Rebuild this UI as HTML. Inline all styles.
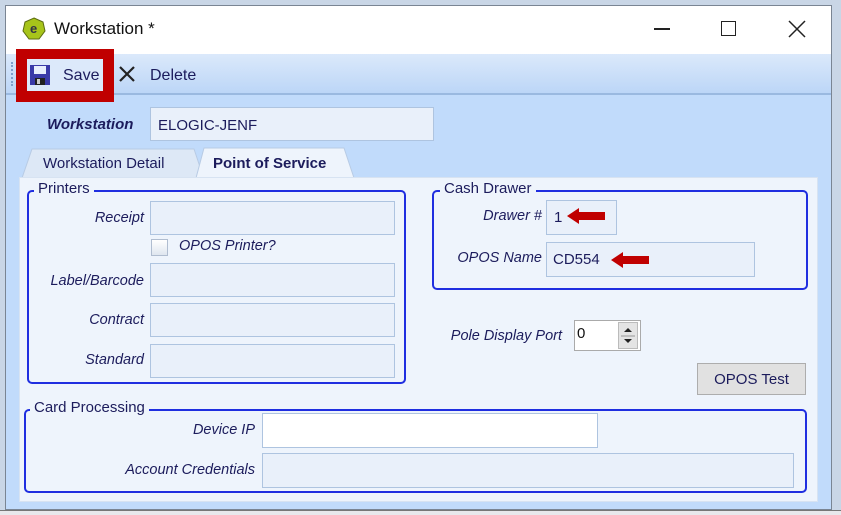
<!DOCTYPE html>
<html><head><meta charset="utf-8"><style>
*{box-sizing:border-box;margin:0;padding:0}
body{width:841px;height:515px;background:#c9d6e6;font-family:"Liberation Sans",sans-serif;font-size:14px;color:#1c1c5c;position:relative;overflow:hidden}
.a{position:absolute}
.win{left:5px;top:5px;width:827px;height:505px;background:#c1dbfb;border:1px solid #7a8593}
.title{left:6px;top:6px;width:825px;height:48px;background:#fff}
.tb{left:6px;top:54px;width:825px;height:41px;background:linear-gradient(#dbe9fb,#bcd6f7);border-bottom:2px solid #9ab9e0}
.panel{left:19px;top:177px;width:799px;height:325px;background:#eef4fc;border:1px solid #d7e3f2}
.grp{border:2px solid #1f2ee0;border-radius:5px}
.lg{background:#eef4fc;padding:0 4px;font-size:15px;color:#1c1c5c}
.f{background:#e9f0fa;border:1px solid #aec4e0}
.l{font-style:italic;text-align:right;font-size:14.5px}
</style></head><body>
<div class="a win"></div>
<div class="a title"></div>
<svg class="a" style="left:22px;top:17px" width="24" height="24" viewBox="0 0 24 24"><polygon points="12,1 21,5 23,14 17,22 7,22 1,14 3,5" fill="#a7c41a" stroke="#5c6b10" stroke-width="1"/><text x="8" y="16" font-size="13" font-weight="bold" fill="#334">e</text></svg>
<div class="a" style="left:54px;top:19px;font-size:17px;color:#111">Workstation *</div>
<div class="a" style="left:654px;top:28px;width:16px;height:1.5px;background:#222"></div>
<div class="a" style="left:721px;top:21px;width:15px;height:15px;border:1.5px solid #222"></div>
<svg class="a" style="left:788px;top:20px" width="18" height="18"><path d="M1 1L17 17M17 1L1 17" stroke="#222" stroke-width="1.5"/></svg>
<div class="a tb"></div>
<div class="a" style="left:11px;top:62px;width:2px;height:24px;border-left:2px dotted #7fa0cc"></div>
<div class="a" style="left:16px;top:49px;width:98px;height:53px;background:#c00000"></div>
<div class="a" style="left:27px;top:59px;width:76px;height:32px;background:#dce9fa"></div>
<svg class="a" style="left:29px;top:64px" width="22" height="22"><rect x="1" y="1" width="20" height="20" fill="#3a3aa8"/><rect x="5" y="2" width="12" height="8" fill="#e8eefc"/><rect x="6" y="14" width="10" height="7" fill="#222"/><rect x="8" y="15" width="3" height="5" fill="#ccc"/></svg>
<div class="a" style="left:63px;top:67px;font-size:16px">Save</div>
<svg class="a" style="left:118px;top:65px" width="18" height="18"><path d="M2 2L16 16M16 2L2 16" stroke="#222" stroke-width="2.2"/></svg>
<div class="a" style="left:150px;top:67px;font-size:16px">Delete</div>
<div class="a" style="left:47px;top:116px;font-weight:bold;font-style:italic;font-size:15px">Workstation</div>
<div class="a f" style="left:150px;top:107px;width:284px;height:34px"></div>
<div class="a" style="left:158px;top:117px;font-size:15px">ELOGIC-JENF</div>
<svg class="a" style="left:18px;top:147px" width="340" height="32"><path d="M4 31L14 2H176L182 20L180 31Z" fill="#dde8f6" stroke="#b8cbe4"/><path d="M178 31L186 1H326L336 31Z" fill="#eef4fc" stroke="#b8cbe4"/></svg>
<div class="a" style="left:43px;top:155px;font-size:15px">Workstation Detail</div>
<div class="a" style="left:213px;top:155px;font-size:15px;font-weight:bold">Point of Service</div>
<div class="a panel"></div>
<div class="a grp" style="left:27px;top:190px;width:379px;height:194px"></div>
<div class="a lg" style="left:34px;top:180px">Printers</div>
<div class="a l" style="left:40px;top:210px;width:104px">Receipt</div>
<div class="a f" style="left:150px;top:201px;width:245px;height:34px"></div>
<div class="a" style="left:151px;top:239px;width:17px;height:17px;border:1px solid #b0bdd0;background:linear-gradient(#fff,#dfe6ef)"></div>
<div class="a l" style="left:179px;top:238px;text-align:left">OPOS Printer?</div>
<div class="a l" style="left:40px;top:273px;width:104px">Label/Barcode</div>
<div class="a f" style="left:150px;top:263px;width:245px;height:34px"></div>
<div class="a l" style="left:40px;top:312px;width:104px">Contract</div>
<div class="a f" style="left:150px;top:303px;width:245px;height:34px"></div>
<div class="a l" style="left:40px;top:352px;width:104px">Standard</div>
<div class="a f" style="left:150px;top:344px;width:245px;height:34px"></div>
<div class="a grp" style="left:432px;top:190px;width:376px;height:100px"></div>
<div class="a lg" style="left:440px;top:180px">Cash Drawer</div>
<div class="a l" style="left:440px;top:208px;width:102px">Drawer #</div>
<div class="a f" style="left:546px;top:200px;width:71px;height:35px"></div>
<div class="a" style="left:554px;top:209px;font-size:15px">1</div>
<svg class="a" style="left:567px;top:208px" width="40" height="16"><path d="M0 8L12 0V4H38V12H12V16Z" fill="#c00000"/></svg>
<div class="a l" style="left:440px;top:250px;width:102px">OPOS Name</div>
<div class="a f" style="left:546px;top:242px;width:209px;height:35px"></div>
<div class="a" style="left:553px;top:251px;font-size:15px">CD554</div>
<svg class="a" style="left:611px;top:252px" width="40" height="16"><path d="M0 8L12 0V4H38V12H12V16Z" fill="#c00000"/></svg>
<div class="a l" style="left:430px;top:328px;width:132px">Pole Display Port</div>
<div class="a" style="left:574px;top:320px;width:67px;height:31px;background:#fff;border:1px solid #aaa"></div>
<div class="a" style="left:577px;top:325px;font-size:15px;color:#111">0</div>
<div class="a" style="left:618px;top:322px;width:20px;height:27px;background:#e4e4e4;border:1px solid #bbb"></div>
<svg class="a" style="left:620px;top:325px" width="16" height="22"><path d="M4 7L8 3L12 7Z M4 14L8 18L12 14Z" fill="#222"/><path d="M1 11H15" stroke="#999"/></svg>
<div class="a" style="left:697px;top:363px;width:109px;height:32px;background:#e1e1e1;border:1px solid #adadad;text-align:center;line-height:32px;font-size:15px">OPOS Test</div>
<div class="a grp" style="left:24px;top:409px;width:783px;height:84px"></div>
<div class="a lg" style="left:30px;top:399px">Card Processing</div>
<div class="a l" style="left:100px;top:422px;width:155px">Device IP</div>
<div class="a" style="left:262px;top:413px;width:336px;height:35px;background:#fff;border:1px solid #aec4e0"></div>
<div class="a l" style="left:60px;top:462px;width:195px">Account Credentials</div>
<div class="a f" style="left:262px;top:453px;width:532px;height:35px"></div>
<div class="a" style="left:0;top:510px;width:841px;height:5px;background:#e8e8ec;border-top:1px solid #777"></div>
</body></html>
